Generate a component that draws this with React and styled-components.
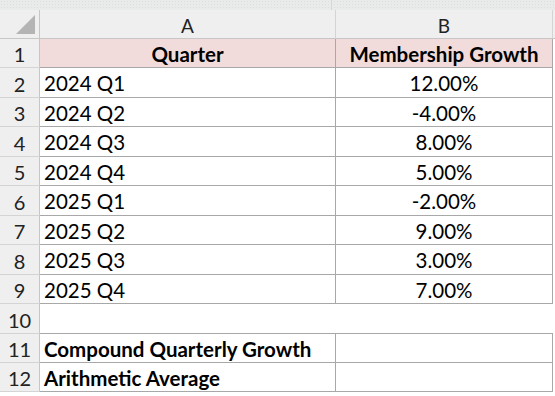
import React from 'react';
import styled, { createGlobalStyle } from 'styled-components';

const GlobalStyle = createGlobalStyle`
  html, body {
    margin: 0;
    padding: 0;
    background: #ffffff;
  }
  body {
    font-family: Lato, "Open Sans", sans-serif;
    color: #000;
  }
`;

const Page = styled.div`
  width: 555px;
  height: 396px;
  overflow: hidden;
  background: #fff;
`;

const TopStrip = styled.div`
  height: 10px;
  display: grid;
  grid-template-columns: 332px 1fr;
  background: #e9ebeb;
  background-image: radial-gradient(#dcdede 0.6px, transparent 0.8px);
  background-size: 3px 3px;
`;

const StripPart = styled.div`
  border-right: ${({ divider }) => (divider ? '1px solid #d6d6d6' : 'none')};
`;

const Grid = styled.div`
  display: grid;
  grid-template-columns: 40px 296px 217px 2px;
  grid-template-rows: 29px ${({ rows }) => rows};
`;

const Corner = styled.div`
  position: relative;
  background: #efefef;
  border-right: 1px solid #c6c6c6;
  border-bottom: 1px solid #c6c6c6;
  box-sizing: border-box;
`;

const Triangle = styled.div`
  position: absolute;
  right: 4px;
  bottom: 4px;
  width: 0;
  height: 0;
  border-left: 19px solid transparent;
  border-bottom: 19px solid #b4b4b4;
`;

const ColHead = styled.div`
  display: flex;
  align-items: center;
  justify-content: center;
  padding-top: 2px;
  box-sizing: border-box;
  background: #efefef;
  border-right: 1px solid #d4d4d4;
  border-bottom: 1px solid #c6c6c6;
  font-size: 19px;
  line-height: 1;
  color: #222;
`;

const Filler = styled.div`
  background: ${({ head }) => (head ? '#efefef' : '#fff')};
  border-bottom: ${({ head }) => (head ? '1px solid #c6c6c6' : 'none')};
  box-sizing: border-box;
`;

const RowHead = styled.div`
  display: flex;
  align-items: center;
  justify-content: center;
  padding-top: 2px;
  box-sizing: border-box;
  background: #efefef;
  border-right: 1px solid #c6c6c6;
  border-bottom: 1px solid #d4d4d4;
  font-size: 20px;
  line-height: 1;
  color: #222;
`;

const Cell = styled.div`
  display: flex;
  align-items: center;
  justify-content: ${({ align }) => (align === 'center' ? 'center' : 'flex-start')};
  padding: 2px 4px 0 4px;
  box-sizing: border-box;
  background: ${({ pink }) => (pink ? '#f2dcdb' : '#fff')};
  border-right: ${({ edge }) => (edge ? '1px solid #a8a8a8' : 'none')};
  border-bottom: ${({ line }) => (line ? '1px solid #a8a8a8' : 'none')};
  font-size: 20.5px;
  line-height: 1;
  font-weight: ${({ bold }) => (bold ? 700 : 400)};
  white-space: nowrap;
`;

const data = [
  ['2024 Q1', '12.00%'],
  ['2024 Q2', '-4.00%'],
  ['2024 Q3', '8.00%'],
  ['2024 Q4', '5.00%'],
  ['2025 Q1', '-2.00%'],
  ['2025 Q2', '9.00%'],
  ['2025 Q3', '3.00%'],
  ['2025 Q4', '7.00%'],
];

const rowHeights = [29, 30, 29, 30, 29, 30, 29, 30, 29, 30, 29, 29];

const SheetRow = ({ num, a, b, pink, bold, blank, alignA }) => (
  <>
    <RowHead>{num}</RowHead>
    <Cell
      pink={pink}
      bold={bold}
      align={alignA}
      edge={!blank}
      line
    >
      {a}
    </Cell>
    <Cell pink={pink} bold={pink} align="center" edge={!blank} line>
      {b}
    </Cell>
    <Filler />
  </>
);

const App = () => {
  const rows = data.map((row, i) => (
    <SheetRow key={row[0]} num={i + 2} a={row[0]} b={row[1]} />
  ));

  return (
    <Page>
      <GlobalStyle />
      <TopStrip>
        <StripPart divider />
        <StripPart />
      </TopStrip>
      <Grid rows={rowHeights.map(h => `${h}px`).join(' ')}>
        <Corner>
          <Triangle />
        </Corner>
        <ColHead>A</ColHead>
        <ColHead>B</ColHead>
        <Filler head />

        <SheetRow num={1} a="Quarter" b="Membership Growth" pink bold alignA="center" />
        {rows}
        <SheetRow num={10} blank />
        <SheetRow num={11} a="Compound Quarterly Growth" bold />
        <SheetRow num={12} a="Arithmetic Average" bold />
      </Grid>
    </Page>
  );
};

export default App;
